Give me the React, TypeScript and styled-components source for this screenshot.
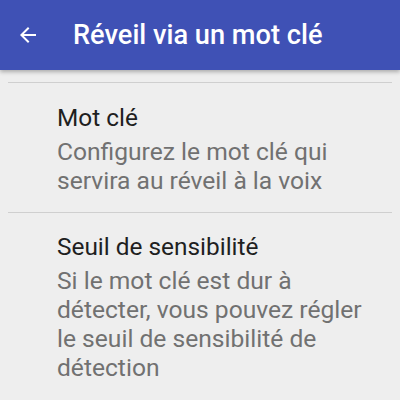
import React from "react";
import styled, { createGlobalStyle } from "styled-components";

const Global = createGlobalStyle`
  html, body { margin: 0; padding: 0; background: #eeeeee; }
  body { font-family: Roboto, "Noto Sans", sans-serif; width: 400px; height: 400px; overflow: hidden; }
`;

const Screen = styled.div`
  width: 400px;
  height: 400px;
  background: #eeeeee;
  display: flex;
  flex-direction: column;
  overflow: hidden;
`;

const AppBar = styled.header`
  height: 70px;
  flex: 0 0 70px;
  background: #3f51b5;
  display: flex;
  align-items: center;
  box-shadow: 0 2px 4px rgba(0, 0, 0, 0.28);
  position: relative;
  z-index: 1;
`;

const BackButton = styled.div`
  width: 24px;
  height: 24px;
  margin-left: 16px;
  display: flex;
`;

const Title = styled.h1`
  margin: 0 0 0 33px;
  color: #ffffff;
  font-family: Roboto, sans-serif;
  font-weight: 500;
  font-size: 27.2px;
  letter-spacing: 0;
`;

const List = styled.div`
  display: flex;
  flex-direction: column;
  padding-top: 12px;
`;

const Divider = styled.div`
  height: 1px;
  margin: 0 8px;
  background: #cfcfcf;
`;

const Item = styled.div<{ $top: number; $bottom: number }>`
  padding: ${(p) => p.$top}px 16px ${(p) => p.$bottom}px 57px;
  display: flex;
  flex-direction: column;
`;

const ItemTitle = styled.div`
  font-size: 24.4px;
  line-height: 29px;
  color: #1f1f1f;
  margin-bottom: 5px;
`;

const ItemSummary = styled.div`
  font-size: 24.6px;
  line-height: 29px;
  color: #717171;
`;

export default function App() {
  return (
    <Screen>
      <Global />
      <AppBar>
        <BackButton>
          <svg width="24" height="24" viewBox="0 0 24 24">
            <path fill="#ffffff" d="M20 11H7.83l5.59-5.59L12 4l-8 8 8 8 1.41-1.41L7.83 13H20v-2z" />
          </svg>
        </BackButton>
        <Title>Réveil via un mot clé</Title>
      </AppBar>
      <List>
        <Divider />
        <Item $top={20} $bottom={17}>
          <ItemTitle>Mot clé</ItemTitle>
          <ItemSummary>Configurez le mot clé qui servira au réveil à la voix</ItemSummary>
        </Item>
        <Divider />
        <Item $top={19} $bottom={17}>
          <ItemTitle>Seuil de sensibilité</ItemTitle>
          <ItemSummary>
            Si le mot clé est dur à détecter, vous pouvez régler le seuil de sensibilité de détection
          </ItemSummary>
        </Item>
      </List>
    </Screen>
  );
}
